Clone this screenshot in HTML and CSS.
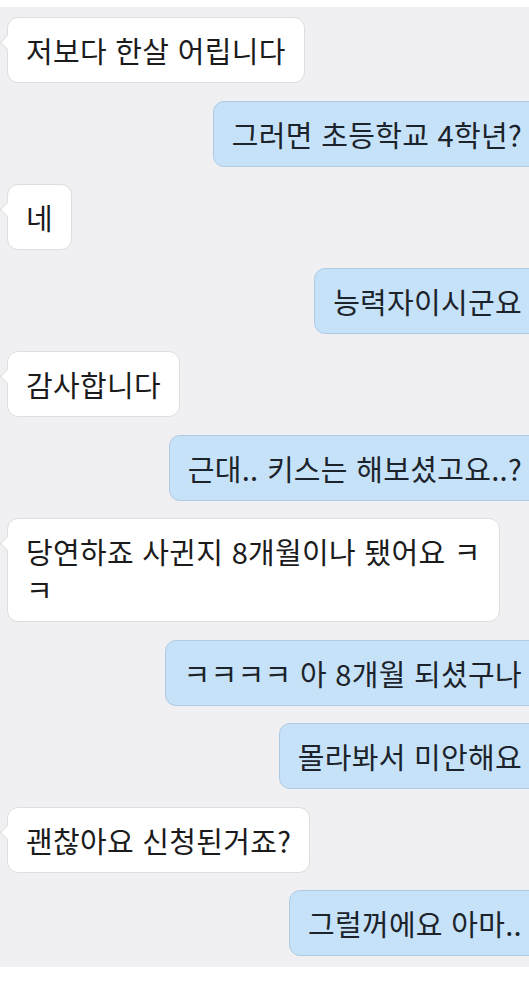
FILE: index.html
```html
<!DOCTYPE html>
<html lang="ko">

<head>
    <meta charset="UTF-8">
    <meta name="viewport" content="width=device-width, initial-scale=1.0">
    <title>대화</title>
    <link rel="stylesheet" href="styles.css">
</head>

<body>
    <div class="chat">
        <div class="bubble in">저보다 한살 어립니다</div>
        <div class="bubble out">그러면 초등학교 4학년?</div>
        <div class="bubble in">네</div>
        <div class="bubble out">능력자이시군요</div>
        <div class="bubble in">감사합니다</div>
        <div class="bubble out">근대.. 키스는 해보셨고요..?</div>
        <div class="bubble in">당연하죠 사귄지 8개월이나 됐어요 ㅋ<br>ㅋ</div>
        <div class="bubble out">ㅋㅋㅋㅋ 아 8개월 되셨구나</div>
        <div class="bubble out">몰라봐서 미안해요</div>
        <div class="bubble in">괜찮아요 신청된거죠?</div>
        <div class="bubble out">그럴꺼에요 아마..</div>
    </div>
</body>

</html>
```
FILE: styles.css
```css
body {
    margin: 0;
    padding: 0;
    background: #ffffff;
    font-family: "Noto Sans CJK KR", "Noto Sans", sans-serif;
    overflow: hidden;
}

.chat {
    margin-top: 7px;
    height: 960px;
    box-sizing: border-box;
    padding: 10px 0 0 7px;
    background: #f0f0f2;
    display: flex;
    flex-direction: column;
    gap: 17.5px;
    overflow: hidden;
}

.bubble {
    position: relative;
    box-sizing: border-box;
    padding: 13px 18px;
    font-size: 29px;
    line-height: 38px;
    letter-spacing: 0.3px;
    border-radius: 11px;
    white-space: nowrap;
}

.in {
    align-self: flex-start;
    background: #ffffff;
    border: 1px solid #dedee0;
    color: #1b1b1b;
}

.in::before {
    content: "";
    position: absolute;
    left: -6px;
    top: 19px;
    width: 10px;
    height: 10px;
    background: #ffffff;
    border-left: 1px solid #dedee0;
    border-bottom: 1px solid #dedee0;
    transform: rotate(45deg);
}

.out {
    align-self: flex-end;
    margin-right: -12px;
    padding-right: 18px;
    background: #c6e2f8;
    border: 1px solid #aecbe3;
    color: #1c232b;
}
```
